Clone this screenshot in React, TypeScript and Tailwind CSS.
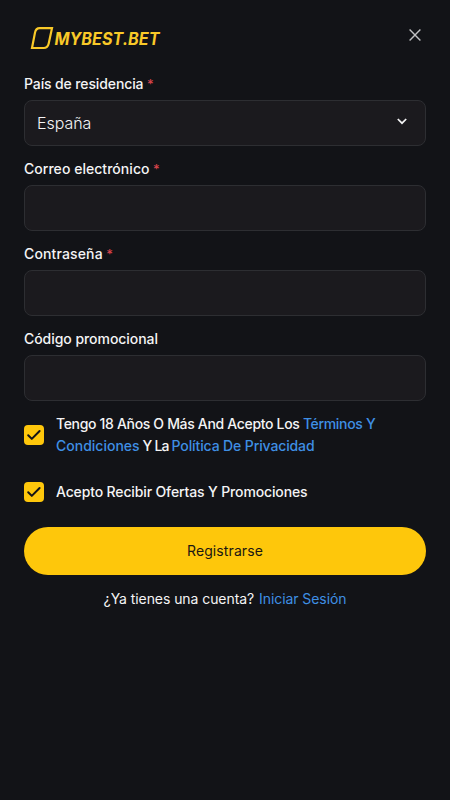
import React from 'react';

interface FieldProps {
  label: string;
  required?: boolean;
  labelClassName?: string;
  children?: React.ReactNode;
}

const Field: React.FC<FieldProps> = ({ label, required, labelClassName, children }) => {
  return (
    <div className="mb-[13px]">
      <div className="mb-1.5 flex h-5 items-center whitespace-nowrap text-sm font-medium leading-5">
        <span className={labelClassName}>{label}</span>
        {required && <span className="ml-[3.5px] text-[13px] text-[#d8434b]">*</span>}
      </div>
      <div className="flex h-[46px] items-center justify-between rounded-lg border border-[#2d2e32] bg-[#1b1a1e] px-3">
        {children}
      </div>
    </div>
  );
};

const Checkbox: React.FC = () => {
  return (
    <span className="flex size-5 shrink-0 items-center justify-center rounded-[4px] bg-[#fec70b]">
      <svg width="20" height="20" viewBox="0 0 20 20" fill="none">
        <path
          d="M4.2 10.2L7.8 13.9L15.6 6"
          stroke="#121317"
          strokeWidth="2"
          strokeLinecap="round"
          strokeLinejoin="round"
        />
      </svg>
    </span>
  );
};

const Logo: React.FC = () => {
  return (
    <div className="flex items-center text-[#f9c928]">
      <svg width="24" height="28" viewBox="0 0 24 28" fill="none">
        <path
          d="M9.6 4.2H22L18.7 19.4Q17.6 24 13.8 24H2L5 8.6Q5.9 4.2 9.6 4.2Z"
          stroke="currentColor"
          strokeWidth="2.2"
        />
      </svg>
      <svg width="110" height="28" viewBox="0 0 110 28" className="overflow-visible">
        <text
          x="0.5"
          y="21"
          fill="currentColor"
          textLength="105"
          lengthAdjust="spacingAndGlyphs"
          className="font-['Inter',sans-serif] text-[17px] font-bold italic"
        >
          MYBEST.BET
        </text>
      </svg>
    </div>
  );
};

const App: React.FC = () => {
  return (
    <div className="min-h-screen bg-[#121317] px-6 font-['Inter',sans-serif] text-[#f4f4f5]">
      <header className="flex h-[74px] items-start justify-between pt-6">
        <div className="ml-1.5">
          <Logo />
        </div>
        <button type="button" aria-label="Cerrar" className="mr-[5px] mt-[5px]">
          <svg width="12" height="12" viewBox="0 0 12 12" fill="none">
            <path d="M0.6 0.6L11.4 11.4M11.4 0.6L0.6 11.4" stroke="#c0c0c2" strokeWidth="1.4" />
          </svg>
        </button>
      </header>

      <Field label="País de residencia" required labelClassName="tracking-[-0.12px]">
        <span className="text-base font-light tracking-[-0.03px]">España</span>
        <svg width="10" height="7" viewBox="0 0 10 7" fill="none" className="mr-1.5 -mt-1">
          <path d="M0.8 1L5 5.2L9.2 1" stroke="#f4f4f5" strokeWidth="1.7" />
        </svg>
      </Field>
      <Field label="Correo electrónico" required labelClassName="tracking-[0.04px]" />
      <Field label="Contraseña" required labelClassName="tracking-[0.14px]" />
      <Field label="Código promocional" labelClassName="tracking-[-0.05px]" />

      <div className="-mt-px flex items-center gap-3 whitespace-nowrap text-sm font-medium leading-[22px]">
        <Checkbox />
        <div>
          <p className="tracking-[-0.33px]">
            Tengo 18 Años O Más And Acepto Los <span className="text-[#3f8fe4]">Términos Y</span>
          </p>
          <p>
            <span className="text-[#3f8fe4]">Condiciones</span>
            <span className="tracking-[-0.8px]"> Y La </span>
            <span className="tracking-[-0.12px] text-[#3f8fe4]">Política De Privacidad</span>
          </p>
        </div>
      </div>
      <div className="mt-6 flex items-center gap-3 whitespace-nowrap text-sm font-medium leading-[22px]">
        <Checkbox />
        <p className="tracking-[-0.14px]">Acepto Recibir Ofertas Y Promociones</p>
      </div>

      <button
        type="button"
        className="mt-6 flex h-12 w-full items-center justify-center rounded-full bg-[#fec70b] text-sm tracking-[0.1px] text-[#1a1712]"
      >
        Registrarse
      </button>
      <div className="mt-[13px] flex items-center justify-center gap-[5px] whitespace-nowrap text-sm leading-[22px]">
        <span className="tracking-[-0.07px]">¿Ya tienes una cuenta?</span>
        <a className="tracking-[-0.08px] text-[#3f8fe4]">Iniciar Sesión</a>
      </div>
    </div>
  );
};

export default App;
